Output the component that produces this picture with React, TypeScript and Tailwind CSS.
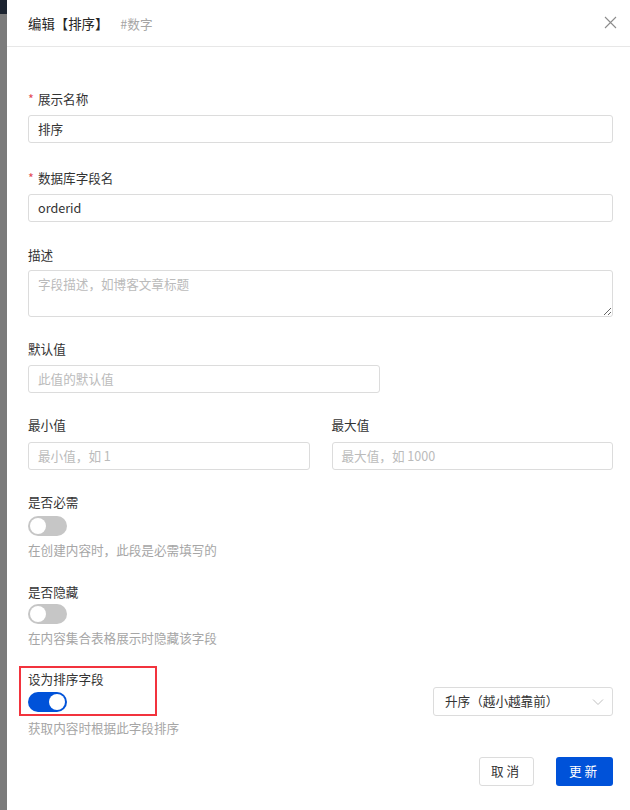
import { useState } from "react";

const FONT = { fontFamily: '"Noto Sans CJK SC", "Noto Sans", sans-serif' };

function Label({ text, required }: { text: string; required?: boolean }) {
  return (
    <div className="flex h-[20px] items-center text-[12.6px] leading-[20px] text-[#333333]">
      {required && <span className="mr-[4px] text-[#e34d59]">*</span>}
      {text}
    </div>
  );
}

function TextInput({
  value,
  placeholder,
  className = "",
}: {
  value?: string;
  placeholder?: string;
  className?: string;
}) {
  return (
    <div
      className={`flex h-[28px] items-center rounded-[3px] border border-[#dcdcdc] px-[9px] text-[12.6px] ${className}`}
    >
      {value ? (
        <span className="text-[#333333]">{value}</span>
      ) : (
        <span className="text-[#bbbbbb]">{placeholder}</span>
      )}
    </div>
  );
}

function Toggle({ on }: { on?: boolean }) {
  return (
    <div
      className={`flex h-[20px] w-[39px] items-center rounded-full px-[2px] ${
        on ? "justify-end bg-[#0052d9]" : "justify-start bg-[#c6c6c6]"
      }`}
    >
      <div className="h-[16px] w-[16px] rounded-full bg-white" />
    </div>
  );
}

function Help({ text }: { text: string }) {
  return <div className="h-[20px] text-[12.6px] leading-[20px] text-[#a6a6a6]">{text}</div>;
}

export default function App() {
  const [desc] = useState("");

  return (
    <div className="flex h-[810px] w-[630px] overflow-hidden bg-white" style={FONT}>
      {/* backdrop strip */}
      <div className="flex w-[7px] flex-col">
        <div className="h-[14px] bg-[#1c2430]" />
        <div className="flex-1 bg-[#7b7b7b]" />
      </div>

      <div className="flex flex-1 flex-col bg-white">
        {/* header */}
        <div className="flex h-[47px] items-center justify-between border-b border-[#e7e7e7] pl-[21px] pr-[13px]">
          <div className="flex items-baseline">
            <span className="text-[13.4px] text-[#262626]">编辑【排序】</span>
            <span className="ml-[12px] text-[12.6px] text-[#a6a6a6]">#数字</span>
          </div>
          <svg width="13" height="13" viewBox="0 0 13 13" className="mb-[2px]">
            <path d="M1 1 L12 12 M12 1 L1 12" stroke="#8c8c8c" strokeWidth="1.1" fill="none" />
          </svg>
        </div>

        {/* body */}
        <div className="flex flex-col pl-[21px] pr-[17px] pt-[42px]">
          <Label text="展示名称" required />
          <TextInput value="排序" className="mt-[6px]" />

          <div className="mt-[25px]">
            <Label text="数据库字段名" required />
          </div>
          <TextInput value="orderid" className="mt-[6px]" />

          <div className="mt-[23px]">
            <Label text="描述" />
          </div>
          <textarea
            readOnly
            value={desc}
            placeholder="字段描述，如博客文章标题"
            className="mt-[5px] h-[47px] w-full rounded-[3px] border border-[#dcdcdc] px-[9px] py-[3px] text-[12.6px] leading-[20px] text-[#333333] outline-none placeholder:text-[#bbbbbb]"
            style={FONT}
          />

          <div className="mt-[22px]">
            <Label text="默认值" />
          </div>
          <TextInput placeholder="此值的默认值" className="mt-[6px] w-[352px]" />

          <div className="mt-[22px] grid grid-cols-2 gap-x-[22px]">
            <div className="flex flex-col">
              <Label text="最小值" />
              <TextInput placeholder="最小值，如 1" className="mt-[7px]" />
            </div>
            <div className="flex flex-col">
              <Label text="最大值" />
              <TextInput placeholder="最大值，如 1000" className="mt-[7px]" />
            </div>
          </div>

          <div className="mt-[22px]">
            <Label text="是否必需" />
          </div>
          <div className="mt-[4px]">
            <Toggle />
          </div>
          <div className="mt-[4px]">
            <Help text="在创建内容时，此段是必需填写的" />
          </div>

          <div className="mt-[22px]">
            <Label text="是否隐藏" />
          </div>
          <div className="mt-[2px]">
            <Toggle />
          </div>
          <div className="mt-[4px]">
            <Help text="在内容集合表格展示时隐藏该字段" />
          </div>

          <div className="mt-[21px] flex items-start justify-between">
            <div className="relative flex flex-col">
              <Label text="设为排序字段" />
              <div className="mt-[3px]">
                <Toggle on />
              </div>
              <div className="absolute left-[-9px] top-[-3px] h-[50px] w-[138px] border-2 border-[#f2333d]" />
            </div>
            <div className="mt-[18px] flex h-[29px] w-[180px] items-center justify-between rounded-[3px] border border-[#dcdcdc] pl-[11px] pr-[8px] text-[12.6px] text-[#333333]">
              <span>升序（越小越靠前）</span>
              <svg width="12" height="8" viewBox="0 0 12 8">
                <path d="M1 1.5 L6 6.5 L11 1.5" stroke="#bfbfbf" strokeWidth="1" fill="none" />
              </svg>
            </div>
          </div>
          <div className="mt-[2px]">
            <Help text="获取内容时根据此字段排序" />
          </div>

          <div className="mt-[19px] flex justify-end gap-[22px]">
            <div className="flex h-[29px] w-[55px] items-center justify-center rounded-[3px] border border-[#dcdcdc] text-[12.6px] tracking-[3px] text-[#333333]">
              取消
            </div>
            <div className="flex h-[29px] w-[57px] items-center justify-center rounded-[3px] bg-[#0052d9] text-[12.6px] tracking-[3px] text-white">
              更新
            </div>
          </div>
        </div>
      </div>
    </div>
  );
}
